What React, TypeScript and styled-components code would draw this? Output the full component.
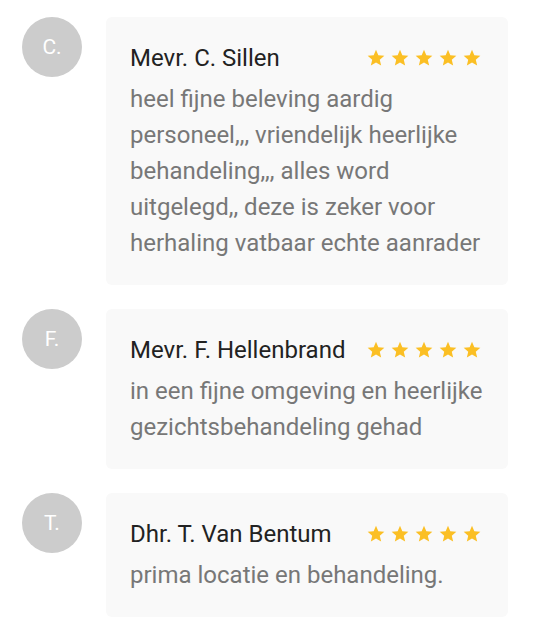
import React from 'react';
import styled, { createGlobalStyle } from 'styled-components';

interface Review {
  initial: string;
  name: string;
  text: string;
  rating: number;
}

const REVIEWS: Review[] = [
  {
    initial: 'C.',
    name: 'Mevr. C. Sillen',
    text: 'heel fijne beleving aardig personeel,,, vriendelijk heerlijke behandeling,,, alles word uitgelegd,, deze is zeker voor herhaling vatbaar echte aanrader',
    rating: 5,
  },
  {
    initial: 'F.',
    name: 'Mevr. F. Hellenbrand',
    text: 'in een fijne omgeving en heerlijke gezichtsbehandeling gehad',
    rating: 5,
  },
  {
    initial: 'T.',
    name: 'Dhr. T. Van Bentum',
    text: 'prima locatie en behandeling.',
    rating: 5,
  },
];

const GlobalStyle = createGlobalStyle`
  body {
    margin: 0;
    background: #ffffff;
    font-family: Roboto, "Liberation Sans", Arial, sans-serif;
  }
`;

const Star = () => (
  <svg width="20" height="20" viewBox="0 0 24 24" aria-hidden="true">
    <path
      fill="currentColor"
      d="M12 17.27L18.18 21l-1.64-7.03L22 9.24l-7.19-.61L12 2 9.19 8.63 2 9.24l5.46 4.73L5.82 21z"
    />
  </svg>
);

const App: React.FC = () => {
  return (
    <>
      <GlobalStyle />
      <List>
        {REVIEWS.map((review) => (
          <Row key={review.name}>
            <Avatar>{review.initial}</Avatar>
            <Card>
              <CardHeader>
                <Name>{review.name}</Name>
                <Stars>
                  {Array.from({ length: review.rating }).map((_, i) => (
                    <Star key={i} />
                  ))}
                </Stars>
              </CardHeader>
              <Body>{review.text}</Body>
            </Card>
          </Row>
        ))}
      </List>
    </>
  );
};

export default App;

const List = styled.div`
  display: flex;
  flex-direction: column;
  gap: 24px;
  padding: 17px 39px 0 22px;
`;

const Row = styled.div`
  display: flex;
  align-items: flex-start;
  gap: 24px;
`;

const Avatar = styled.div`
  flex: 0 0 60px;
  width: 60px;
  height: 60px;
  border-radius: 50%;
  background: #cccccc;
  color: #ffffff;
  font-size: 21px;
  display: flex;
  align-items: center;
  justify-content: center;
  padding-bottom: 1px;
  box-sizing: border-box;
`;

const Card = styled.div`
  flex: 1;
  background: #f9f9f9;
  border-radius: 6px;
  padding: 23px 24px 24px 24px;
`;

const CardHeader = styled.div`
  display: flex;
  align-items: center;
  justify-content: space-between;
  margin-bottom: 5px;
`;

const Name = styled.div`
  font-size: 24px;
  line-height: 36px;
  color: #222222;
`;

const Stars = styled.div`
  display: flex;
  gap: 4px;
  color: #fbbf24;
  margin-right: 2px;

  svg {
    display: block;
  }
`;

const Body = styled.p`
  margin: 0;
  font-size: 24px;
  line-height: 36px;
  color: #777777;
`;
